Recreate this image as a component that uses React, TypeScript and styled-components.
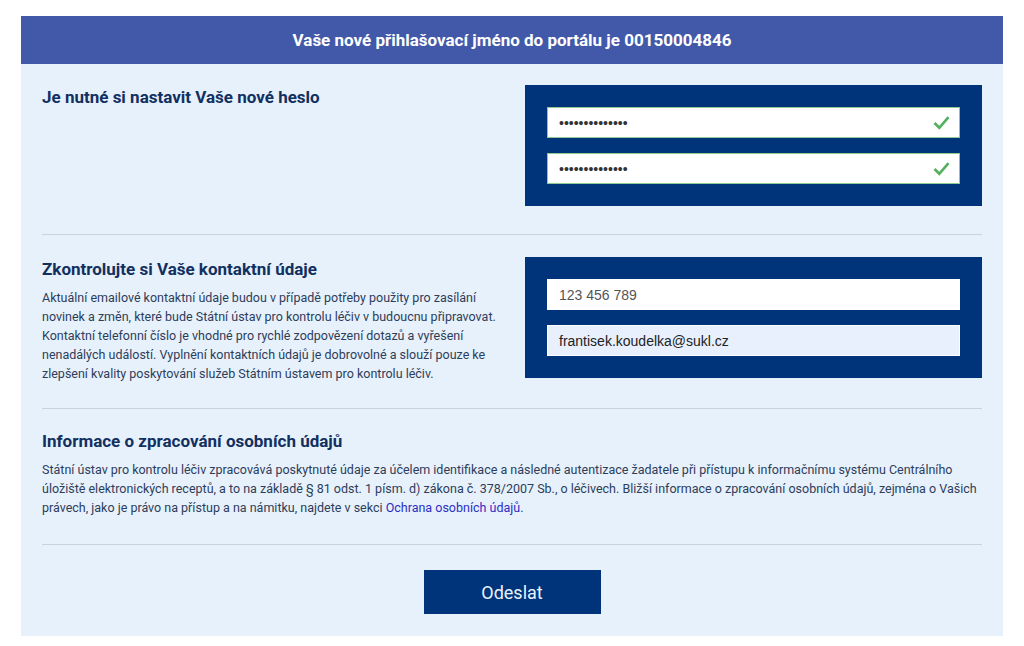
import React from 'react';
import styled, { createGlobalStyle } from 'styled-components';

const navy = '#00347a';
const ink = '#12305f';
const text = '#2d3d5a';
const paleBlue = '#e7f1fc';
const green = '#55b060';

const GlobalStyle = createGlobalStyle`
  html, body {
    margin: 0;
    padding: 0;
    background: #ffffff;
    font-family: Roboto, 'Liberation Sans', sans-serif;
  }
  * {
    box-sizing: border-box;
  }
`;

const Page = styled.div`
  padding: 16px 21px 0 21px;
`;

const Card = styled.div`
  width: 982px;
  background: ${paleBlue};
`;

const Banner = styled.div`
  height: 48px;
  background: #4259a9;
  color: #ffffff;
  display: flex;
  align-items: center;
  justify-content: center;
  font-size: 17px;
  font-weight: 700;
`;

const Body = styled.div`
  padding: 0 21px 22px 21px;
`;

const Section = styled.section<{ $top: number; $bottom: number }>`
  display: flex;
  justify-content: space-between;
  align-items: flex-start;
  padding-top: ${(p) => p.$top}px;
  padding-bottom: ${(p) => p.$bottom}px;
  border-bottom: 1px solid #c9d3de;
`;

const Column = styled.div`
  width: 465px;
  padding-top: 2px;
`;

const Wide = styled.div`
  padding-top: 22px;
  padding-bottom: 27px;
  border-bottom: 1px solid #c9d3de;
`;

const Title = styled.h2`
  margin: 0;
  font-size: 17px;
  font-weight: 700;
  color: ${ink};
  line-height: 20px;
`;

const Paragraph = styled.p`
  margin: 9px 0 0 0;
  font-size: 12.5px;
  line-height: 19px;
  color: ${text};
`;

const Link = styled.a`
  color: #2b2fc4;
  text-decoration: none;
`;

const Panel = styled.div`
  width: 457px;
  background: ${navy};
  padding: 22px 22px;
  display: flex;
  flex-direction: column;
  gap: 15px;
`;

const Field = styled.div<{ $valid?: boolean; $tint?: boolean }>`
  height: 31px;
  display: flex;
  align-items: center;
  justify-content: space-between;
  padding: 0 9px 0 11px;
  background: ${(p) => (p.$tint ? '#e8f0fe' : '#ffffff')};
  border: 1px solid ${(p) => (p.$valid ? '#8cc98c' : '#ffffff')};
  font-family: 'Liberation Sans', Arial, sans-serif;
  font-size: 14px;
  color: ${(p) => (p.$tint ? '#222222' : '#555555')};
`;

const Dots = styled.span`
  font-size: 14px;
  color: #333333;
`;

const Actions = styled.div`
  display: flex;
  justify-content: center;
  padding-top: 25px;
`;

const Submit = styled.button`
  width: 177px;
  height: 44px;
  border: none;
  background: ${navy};
  color: #e9f2ff;
  font-family: Roboto, 'Liberation Sans', sans-serif;
  font-size: 18px;
  font-weight: 400;
  cursor: pointer;
`;

const Check = () => (
  <svg width="17" height="15" viewBox="0 0 17 15">
    <path d="M1.5 8 L6.3 12.8 L15.5 2.2" fill="none" stroke={green} strokeWidth="2.7" />
  </svg>
);

const PasswordField = () => (
  <Field $valid>
    <Dots>••••••••••••••</Dots>
    <Check />
  </Field>
);

const App = () => (
  <Page>
    <GlobalStyle />
    <Card>
      <Banner>Vaše nové přihlašovací jméno do portálu je 00150004846</Banner>
      <Body>
        <Section $top={21} $bottom={28}>
          <Column>
            <Title>Je nutné si nastavit Vaše nové heslo</Title>
          </Column>
          <Panel>
            <PasswordField />
            <PasswordField />
          </Panel>
        </Section>
        <Section $top={22} $bottom={25}>
          <Column>
            <Title>Zkontrolujte si Vaše kontaktní údaje</Title>
            <Paragraph>
              Aktuální emailové kontaktní údaje budou v případě potřeby použity pro zasílání
              novinek a změn, které bude Státní ústav pro kontrolu léčiv v budoucnu připravovat.
              Kontaktní telefonní číslo je vhodné pro rychlé zodpovězení dotazů a vyřešení
              nenadálých událostí. Vyplnění kontaktních údajů je dobrovolné a slouží pouze ke
              zlepšení kvality poskytování služeb Státním ústavem pro kontrolu léčiv.
            </Paragraph>
          </Column>
          <Panel>
            <Field>123 456 789</Field>
            <Field $tint>frantisek.koudelka@sukl.cz</Field>
          </Panel>
        </Section>
        <Wide>
          <Title>Informace o zpracování osobních údajů</Title>
          <Paragraph>
            Státní ústav pro kontrolu léčiv zpracovává poskytnuté údaje za účelem identifikace a
            následné autentizace žadatele při přístupu k informačnímu systému Centrálního úložiště
            elektronických receptů, a to na základě § 81 odst. 1 písm. d) zákona č. 378/2007 Sb.,
            o léčivech. Bližší informace o zpracování osobních údajů, zejména o Vašich právech,
            jako je právo na přístup a na námitku, najdete v sekci{' '}
            <Link href="#">Ochrana osobních údajů</Link>.
          </Paragraph>
        </Wide>
        <Actions>
          <Submit>Odeslat</Submit>
        </Actions>
      </Body>
    </Card>
  </Page>
);

export default App;
